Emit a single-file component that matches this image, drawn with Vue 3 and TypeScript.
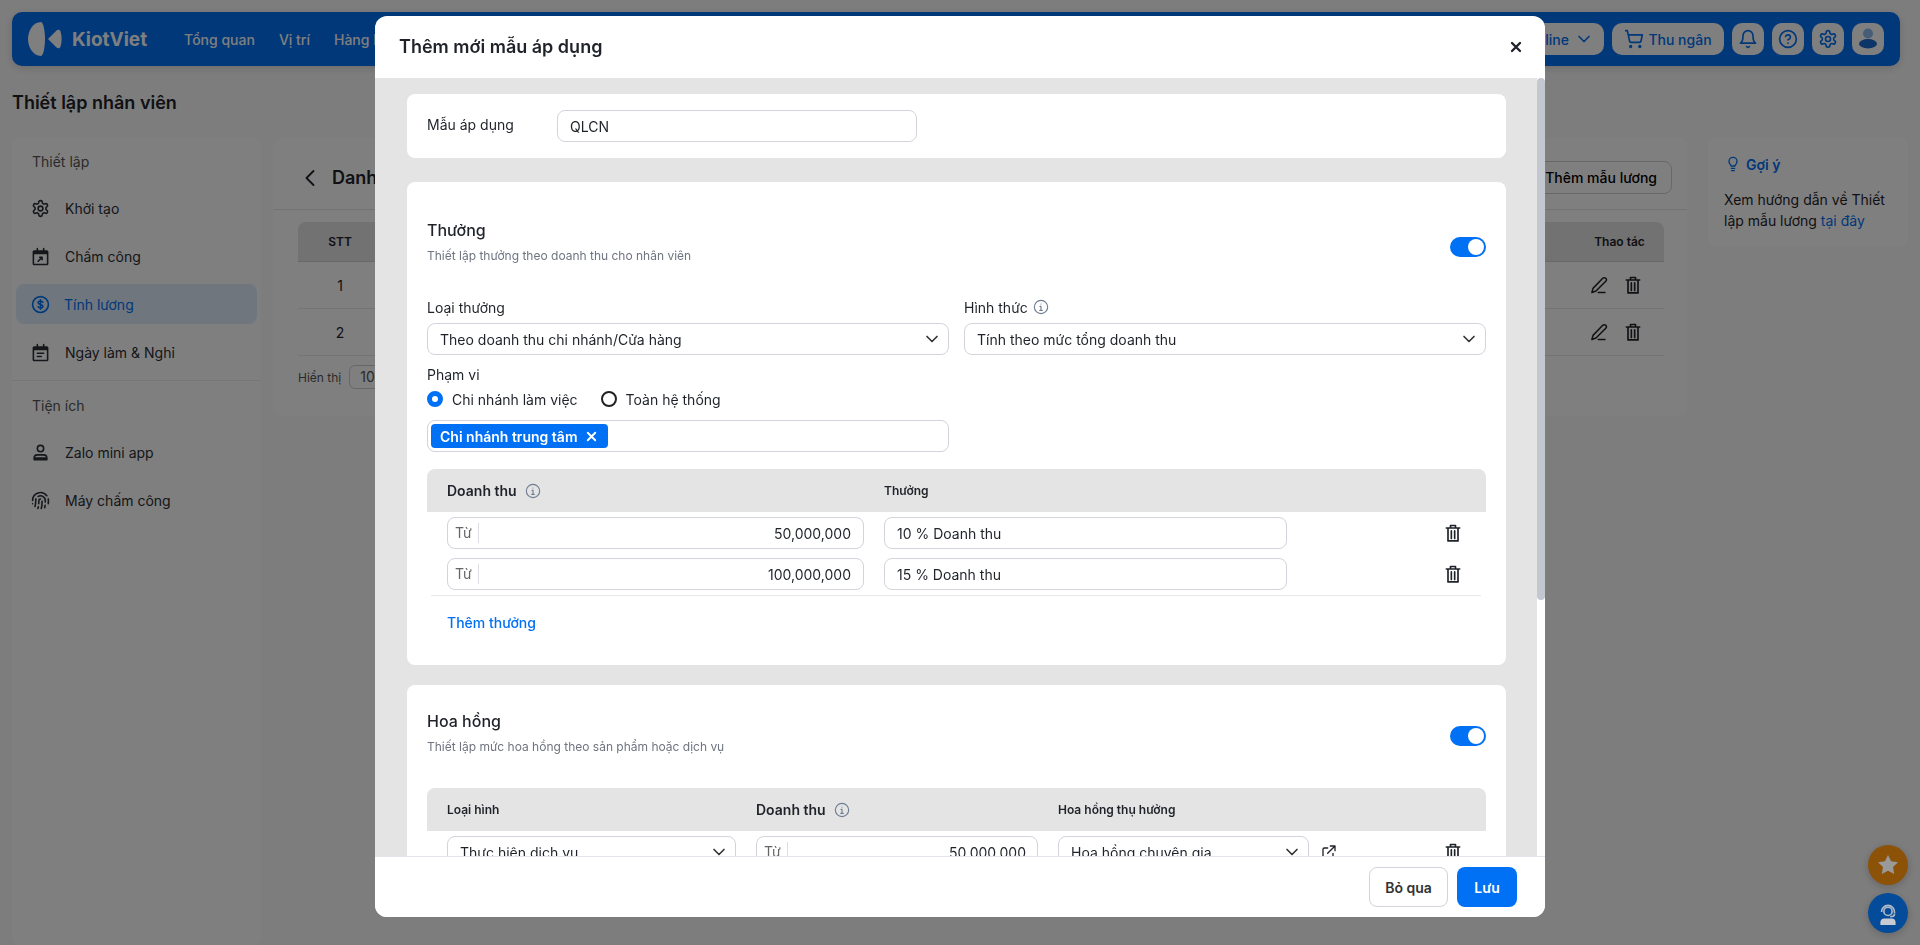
<template>
  <div class="page">
    <header class="topbar">
      <div class="brand">
        <svg class="logo" viewBox="0 0 34 34">
          <path d="M13 0C5 0 0 9 0 17s5 17 13 17c2.500 0 4-10 4-17S15.500 0 13 0z" />
          <path d="M20 17l8-8c2-2 4-1.500 4.500.5 1.500 4.500 1.500 10.500 0 15-.5 2-2.500 2.500-4.500.5z" />
        </svg>
        <span class="brand-name">KiotViet</span>
      </div>
      <nav class="nav">
        <a v-for="item in navItems" :key="item">{{ item }}</a>
      </nav>
      <div class="top-actions">
        <button class="top-btn">
          Bán online
          <svg class="ico ico-20" viewBox="0 0 24 24"><path :d="icons.chevronDown" /></svg>
        </button>
        <button class="top-btn cashier">
          <svg class="ico ico-20" viewBox="0 0 24 24"><path :d="icons.cart" /></svg>
          Thu ngân
        </button>
        <button v-for="name in topIcons" :key="name" class="top-icon">
          <svg class="ico ico-20" viewBox="0 0 24 24"><path :d="icons[name]" /></svg>
        </button>
        <button class="top-icon">
          <svg class="avatar" viewBox="0 0 32 32">
            <circle cx="16" cy="10.500" r="5" fill="#8fb8ee" />
            <ellipse cx="16" cy="20.700" rx="9" ry="4.700" fill="#1a6bd0" />
          </svg>
        </button>
      </div>
    </header>

    <h1 class="page-title">Thiết lập nhân viên</h1>

    <div class="layout">
      <aside class="side">
        <div class="side-label">Thiết lập</div>
        <a
          v-for="item in setupItems"
          :key="item.label"
          class="side-item"
          :class="{ active: item.active }"
        >
          <svg class="ico side-ico" viewBox="0 0 24 24"><path :d="icons[item.icon]" /></svg>
          {{ item.label }}
        </a>
        <div class="side-divider"></div>
        <div class="side-label second">Tiện ích</div>
        <a v-for="item in toolItems" :key="item.label" class="side-item">
          <svg class="ico side-ico" viewBox="0 0 24 24"><path :d="icons[item.icon]" /></svg>
          {{ item.label }}
        </a>
      </aside>

      <main class="main">
        <div class="main-head">
          <svg class="ico back" viewBox="0 0 24 24"><path :d="icons.chevronLeft" /></svg>
          <h2>Danh sách mẫu lương</h2>
          <button class="outline-btn">Thêm mẫu lương</button>
        </div>
        <div class="list">
          <div class="list-row list-head">
            <span class="stt">STT</span>
            <span>Tên mẫu lương</span>
            <span class="act-title">Thao tác</span>
          </div>
          <div v-for="n in 2" :key="n" class="list-row">
            <span class="stt">{{ n }}</span>
            <span>Mẫu lương {{ n }}</span>
            <span class="act-icons">
              <svg class="ico ico-18" viewBox="0 0 24 24"><path :d="icons.pencil" /></svg>
              <svg class="ico ico-20" viewBox="0 0 24 24"><path :d="icons.trash" /></svg>
            </span>
          </div>
        </div>
        <div class="pager">
          <span>Hiển thị</span>
          <span class="pager-size">10</span>
        </div>
      </main>

      <aside class="hint">
        <div class="hint-title">
          <svg class="ico ico-16" viewBox="0 0 24 24"><path :d="icons.bulb" /></svg>
          Gợi ý
        </div>
        <p>Xem hướng dẫn về Thiết lập mẫu lương <a>tại đây</a></p>
      </aside>
    </div>

    <div class="overlay"></div>

    <div class="fab fab-star">
      <svg viewBox="0 0 24 24" width="24" height="24"><path fill="#9a9a9a" :d="icons.star" /></svg>
    </div>
    <div class="fab fab-help">
      <svg viewBox="0 0 24 24" width="26" height="26" fill="none" stroke="#b4bcc8" stroke-width="1.500">
        <path d="M6 11a6 6 0 0 1 12 0v1.500M18 13c0 1.500-1.500 2.500-4 2.500" />
        <circle cx="12" cy="10.500" r="3.800" />
        <path fill="#c8ccd2" stroke="none" d="M5 23v-2.500c0-2 1.500-3.500 3.500-3.500h7c2 0 3.500 1.500 3.500 3.500V23z" />
      </svg>
    </div>

    <section class="modal">
      <header class="modal-head">
        <h3>Thêm mới mẫu áp dụng</h3>
        <svg class="ico close" viewBox="0 0 24 24"><path :d="icons.x" /></svg>
      </header>

      <div class="modal-main">
        <div class="modal-body">
          <div class="card name-card">
            <label>Mẫu áp dụng</label>
            <div class="field name-input">QLCN</div>
          </div>

          <div class="card bonus-card">
            <div class="card-head">
              <div>
                <h4>Thưởng</h4>
                <p>Thiết lập thưởng theo doanh thu cho nhân viên</p>
              </div>
              <span class="toggle"></span>
            </div>

            <div class="two-cols">
              <div>
                <div class="field-label">Loại thưởng</div>
                <div class="field select">
                  Theo doanh thu chi nhánh/Cửa hàng
                  <svg class="ico ico-20" viewBox="0 0 24 24"><path :d="icons.chevronDown" /></svg>
                </div>
              </div>
              <div>
                <div class="field-label">
                  Hình thức
                  <svg class="ico info" viewBox="0 0 24 24"><path :d="icons.info" /></svg>
                </div>
                <div class="field select">
                  Tính theo mức tổng doanh thu
                  <svg class="ico ico-20" viewBox="0 0 24 24"><path :d="icons.chevronDown" /></svg>
                </div>
              </div>
            </div>

            <div class="field-label scope-label">Phạm vi</div>
            <div class="radios">
              <span class="radio checked"></span>
              <span class="radio-text first">Chi nhánh làm việc</span>
              <span class="radio"></span>
              <span class="radio-text">Toàn hệ thống</span>
            </div>
            <div class="field tag-box">
              <span class="tag">
                Chi nhánh trung tâm
                <svg class="ico tag-x" viewBox="0 0 24 24"><path :d="icons.x" /></svg>
              </span>
            </div>

            <div class="grid-table">
              <div class="bonus-grid table-head">
                <span class="head-big">
                  Doanh thu
                  <svg class="ico info" viewBox="0 0 24 24"><path :d="icons.info" /></svg>
                </span>
                <span class="head-small">Thưởng</span>
              </div>
              <div class="bonus-rows">
                <div v-for="row in bonusRows" :key="row.from" class="bonus-grid">
                  <div class="field amount">
                    <span class="prefix">Từ</span>
                    <span class="value">{{ row.from }}</span>
                  </div>
                  <div class="field plain">{{ row.bonus }}</div>
                  <svg class="ico row-trash" viewBox="0 0 24 24"><path :d="icons.trash" /></svg>
                </div>
              </div>
              <div class="add-row"><a>Thêm thưởng</a></div>
            </div>
          </div>

          <div class="card commission-card">
            <div class="card-head">
              <div>
                <h4>Hoa hồng</h4>
                <p>Thiết lập mức hoa hồng theo sản phẩm hoặc dịch vụ</p>
              </div>
              <span class="toggle"></span>
            </div>
            <div class="grid-table commission-table">
              <div class="commission-grid table-head">
                <span class="head-small">Loại hình</span>
                <span class="head-big">
                  Doanh thu
                  <svg class="ico info" viewBox="0 0 24 24"><path :d="icons.info" /></svg>
                </span>
                <span class="head-small">Hoa hồng thụ hưởng</span>
              </div>
              <div class="commission-grid commission-row">
                <div class="field select">
                  Thực hiện dịch vụ
                  <svg class="ico ico-20" viewBox="0 0 24 24"><path :d="icons.chevronDown" /></svg>
                </div>
                <div class="field amount">
                  <span class="prefix">Từ</span>
                  <span class="value">50,000,000</span>
                </div>
                <div class="field select">
                  Hoa hồng chuyên gia
                  <svg class="ico ico-20" viewBox="0 0 24 24"><path :d="icons.chevronDown" /></svg>
                </div>
                <div class="row-actions">
                  <svg class="ico ico-16" viewBox="0 0 24 24"><path :d="icons.open" /></svg>
                  <svg class="ico row-trash" viewBox="0 0 24 24"><path :d="icons.trash" /></svg>
                </div>
              </div>
            </div>
          </div>
        </div>
        <div class="scrollbar"><div class="scroll-thumb"></div></div>
      </div>

      <footer class="modal-foot">
        <button class="btn-cancel">Bỏ qua</button>
        <button class="btn-save">Lưu</button>
      </footer>
    </section>
  </div>
</template>

<script setup lang="ts">
const icons: Record<string, string> = {
  chevronDown: 'm6 9 6 6 6-6',
  chevronLeft: 'm15 18-6-6 6-6',
  x: 'M18 6 6 18M6 6l12 12',
  cart: 'M2 2h2l2.700 12.400a2 2 0 0 0 2 1.600h9.800a2 2 0 0 0 1.900-1.600L22 7H5.100M8 20a1 1 0 1 0 0 2 1 1 0 0 0 0-2zM19 20a1 1 0 1 0 0 2 1 1 0 0 0 0-2z',
  bell: 'M6 8a6 6 0 0 1 12 0c0 7 3 9 3 9H3s3-2 3-9M10.300 21a1.900 1.900 0 0 0 3.400 0',
  help: 'M12 2a10 10 0 1 0 0 20 10 10 0 0 0 0-20zM9.100 9a3 3 0 0 1 5.800 1c0 2-3 3-3 3M12 17h.01',
  gear: 'M12.200 2h-.4a2 2 0 0 0-2 2v.2a2 2 0 0 1-1 1.700l-.4.300a2 2 0 0 1-2 0l-.2-.1a2 2 0 0 0-2.700.7l-.2.400a2 2 0 0 0 .7 2.700l.2.100a2 2 0 0 1 1 1.700v.5a2 2 0 0 1-1 1.700l-.2.100a2 2 0 0 0-.7 2.700l.2.400a2 2 0 0 0 2.700.7l.2-.1a2 2 0 0 1 2 0l.4.300a2 2 0 0 1 1 1.700v.2a2 2 0 0 0 2 2h.4a2 2 0 0 0 2-2v-.2a2 2 0 0 1 1-1.700l.4-.3a2 2 0 0 1 2 0l.2.100a2 2 0 0 0 2.700-.7l.2-.4a2 2 0 0 0-.7-2.700l-.2-.1a2 2 0 0 1-1-1.700v-.5a2 2 0 0 1 1-1.700l.2-.1a2 2 0 0 0 .7-2.700l-.2-.4a2 2 0 0 0-2.700-.7l-.2.100a2 2 0 0 1-2 0l-.4-.3a2 2 0 0 1-1-1.700V4a2 2 0 0 0-2-2zM15 12a3 3 0 1 1-6 0 3 3 0 0 1 6 0z',
  calendarEdit: 'M8 2v4M16 2v4M4 5h16a1 1 0 0 1 1 1v15a1 1 0 0 1-1 1H4a1 1 0 0 1-1-1V6a1 1 0 0 1 1-1zM3 8h18M3 6.500h18M9 18l5-5M11 13h3v3',
  calendarList: 'M8 2v4M16 2v4M4 5h16a1 1 0 0 1 1 1v15a1 1 0 0 1-1 1H4a1 1 0 0 1-1-1V6a1 1 0 0 1 1-1zM3 8h18M3 6.500h18M8 13h8M8 17h5',
  dollar: 'M12 2a10 10 0 1 0 0 20 10 10 0 0 0 0-20zM15 9.200c-.5-1-1.600-1.700-3-1.700-1.800 0-3 .9-3 2.200 0 3 6 1.600 6 4.600 0 1.300-1.200 2.200-3 2.200-1.400 0-2.500-.7-3-1.700M12 6v12',
  user: 'M12 3a4 4 0 1 0 0 8 4 4 0 0 0 0-8zM4 21v-2a4 4 0 0 1 4-4h8a4 4 0 0 1 4 4v2zM4 19h16',
  fingerprint: 'M12 10a2 2 0 0 0-2 2c0 1-.1 2.500-.3 4M14 13c0 2.400 0 6.400-1 9M17.300 21c.1-.6.4-2.300.5-3M2 12a10 10 0 0 1 18-6M2 16h.01M21.800 16c.2-2 .1-5.400 0-6M5 19.500C5.500 18 6 15 6 12a6 6 0 0 1 .3-2M8.700 22c.2-.7.4-1.300.6-2M9 6.800a6 6 0 0 1 9 5.200v2',
  pencil: 'M17 3a2.800 2.800 0 1 1 4 4L8 20l-5.500 2 1.500-5.500zM11 22h9',
  trash: 'M4 6h16M9 6V3h6v3M6 6v15.500h12V6M10 9.500v9M14 9.500v9',
  bulb: 'M10 22h4M9.500 18.500h5M15 15c.2-1.200.7-2 1.500-2.800A6 6 0 0 0 18 8 6 6 0 0 0 6 8c0 1.500.5 3 1.500 4.200.8.800 1.300 1.600 1.500 2.800z',
  info: 'M12 2a10 10 0 1 0 0 20 10 10 0 0 0 0-20zM10.500 11H12v6M10 17h4M12 7.500h.01',
  open: 'M14 3h7v7M10 14 21 3M18 14v5a2 2 0 0 1-2 2H5a2 2 0 0 1-2-2V8a2 2 0 0 1 2-2h5',
  star: 'M12 2l3.100 6.300L22 9.300l-5 4.800 1.200 6.900-6.200-3.200L5.800 21 7 14.100 2 9.300l6.900-1z'
}

const navItems = ['Tổng quan', 'Vị trí', 'Hàng hóa', 'Đơn hàng', 'Khách hàng', 'Nhân viên', 'Sổ quỹ', 'Báo cáo']
const topIcons = ['bell', 'help', 'gear']

const setupItems = [
  { label: 'Khởi tạo', icon: 'gear', active: false },
  { label: 'Chấm công', icon: 'calendarEdit', active: false },
  { label: 'Tính lương', icon: 'dollar', active: true },
  { label: 'Ngày làm & Nghỉ', icon: 'calendarList', active: false }
]
const toolItems = [
  { label: 'Zalo mini app', icon: 'user' },
  { label: 'Máy chấm công', icon: 'fingerprint' }
]

const bonusRows = [
  { from: '50,000,000', bonus: '10 % Doanh thu' },
  { from: '100,000,000', bonus: '15 % Doanh thu' }
]
</script>

<style>
html,
body {
  margin: 0;
  height: 100%;
  overflow: hidden;
}
</style>

<style scoped>
* {
  box-sizing: border-box;
}
.page {
  height: 945px;
  padding: 12px;
  display: flex;
  flex-direction: column;
  background: #f9fbf9;
  font-family: Inter, 'Noto Sans', sans-serif;
  font-size: 14px;
  color: #1f2329;
  overflow: hidden;
}
button {
  font: inherit;
  border: none;
}
.ico {
  fill: none;
  stroke: currentColor;
  stroke-width: 2;
  stroke-linecap: round;
  stroke-linejoin: round;
  flex: none;
}
.ico-16 {
  width: 16px;
  height: 16px;
}
.ico-18 {
  width: 18px;
  height: 18px;
}
.ico-20 {
  width: 20px;
  height: 20px;
}

.topbar {
  flex: none;
  height: 54px;
  margin-right: 8px;
  padding: 0 16px;
  display: flex;
  align-items: center;
  background: #0070f4;
  border-radius: 10px;
  box-shadow: 0 2px 8px rgba(0, 0, 0, 0.15);
}
.brand {
  display: flex;
  align-items: center;
  gap: 10px;
}
.logo {
  width: 34px;
  height: 34px;
  fill: #fff;
}
.brand-name {
  color: #fff;
  font-size: 19px;
  font-weight: 700;
}
.nav {
  margin-left: 37px;
  display: flex;
  gap: 24px;
  color: #fff;
  font-weight: 500;
}
.top-actions {
  margin-left: auto;
  display: flex;
  gap: 8px;
}
.top-btn,
.top-icon {
  height: 32px;
  display: flex;
  align-items: center;
  justify-content: center;
  background: #fff;
  color: #0070f4;
  border-radius: 10px;
  font-weight: 500;
}
.top-btn {
  padding: 0 10px 0 12px;
  gap: 5px;
}
.cashier {
  width: 112px;
  padding: 0;
  gap: 4px;
}
.top-icon {
  width: 32px;
  padding: 0;
}
.avatar {
  width: 32px;
  height: 32px;
}

.page-title {
  flex: none;
  margin: 26px 0 24px;
  font-size: 18px;
  line-height: 22px;
  font-weight: 600;
}

.layout {
  flex: 1;
  min-height: 0;
  margin-bottom: -12px;
  display: flex;
  align-items: flex-start;
}
.side,
.main,
.hint {
  background: #fff;
  border-radius: 8px;
}
.side {
  flex: none;
  width: 249px;
  align-self: stretch;
  padding-top: 12px;
  margin-right: 13px;
}
.side-label {
  height: 24px;
  line-height: 24px;
  padding-left: 20px;
  margin-bottom: 14px;
  color: #555;
}
.side-label.second {
  margin-top: 13px;
  margin-bottom: 14px;
}
.side-item {
  height: 40px;
  margin: 0 4px 8px;
  padding-left: 15px;
  display: flex;
  align-items: center;
  gap: 15px;
  border-radius: 8px;
  color: #2a2e34;
}
.side-ico {
  width: 19px;
  height: 19px;
}
.side-item.active {
  background: #dfecfb;
  color: #0070f4;
  gap: 14px;
}
.side-divider {
  height: 1px;
  margin-top: 1px;
  background: #ececec;
}

.main {
  flex: none;
  width: 1413px;
  margin-right: 21px;
  padding-bottom: 27px;
}
.main-head {
  display: flex;
  align-items: center;
  padding: 23px 15px 15px 22px;
  border-bottom: 1px solid #e4e4e4;
}
.back {
  width: 28px;
  height: 28px;
  margin-right: 8px;
  stroke-width: 1.600;
}
.main-head h2 {
  margin: 0;
  font-size: 18px;
  font-weight: 600;
}
.outline-btn {
  margin-left: auto;
  height: 33px;
  padding: 0 14px;
  background: #fff;
  border: 1px solid #cfcfcf;
  border-radius: 8px;
  font-weight: 500;
}
.list {
  margin: 12px 23px 0 24px;
}
.list-row {
  height: 47px;
  display: grid;
  grid-template-columns: 84px 1fr 59px;
  align-items: center;
  padding-right: 15px;
  border-bottom: 1px solid #e8e8e8;
}
.list-head {
  height: 40px;
  background: #e4e4e4;
  border-radius: 8px 8px 0 0;
  font-size: 12px;
  font-weight: 600;
  border-bottom-color: #d0d0d0;
}
.stt {
  text-align: center;
}
.act-title {
  text-align: center;
}
.act-icons {
  display: flex;
  align-items: center;
  gap: 15px;
}
.pager {
  margin: 9px 0 0 24px;
  display: flex;
  align-items: center;
  gap: 8px;
  font-size: 12px;
  color: #555;
}
.pager-size {
  width: 60px;
  height: 24px;
  line-height: 22px;
  padding-left: 10px;
  border: 1px solid #cfcfcf;
  border-radius: 6px;
  font-size: 14px;
}

.hint {
  flex: none;
  width: 200px;
  height: 108px;
  padding: 16px;
}
.hint-title {
  display: flex;
  align-items: center;
  gap: 5px;
  height: 20px;
  margin-left: 1px;
  color: #0070f4;
  font-weight: 600;
}
.hint p {
  margin: 16px 0 0;
  line-height: 20.500px;
}
.hint a {
  color: #0070f4;
}

.overlay {
  position: fixed;
  inset: 0;
  background: rgba(0, 0, 0, 0.5);
}
.fab {
  position: fixed;
  right: 12px;
  width: 40px;
  height: 40px;
  border-radius: 50%;
  display: flex;
  align-items: center;
  justify-content: center;
  box-shadow: 0 2px 8px rgba(0, 0, 0, 0.2);
}
.fab-star {
  top: 845px;
  background: #8b5208;
}
.fab-help {
  top: 893px;
  background: #044b9a;
  overflow: hidden;
}
.modal {
  position: fixed;
  left: 375px;
  top: 16px;
  width: 1170px;
  height: 901px;
  display: flex;
  flex-direction: column;
  background: #fff;
  border-radius: 12px;
  overflow: hidden;
}
.modal-head {
  flex: none;
  height: 62px;
  padding: 0 25px 1px 24px;
  display: flex;
  align-items: center;
  justify-content: space-between;
}
.modal-head h3 {
  margin: 0;
  font-size: 18px;
  font-weight: 600;
}
.close {
  width: 16px;
  height: 16px;
  margin-right: -4px;
  stroke-width: 3.500;
}
.modal-main {
  flex: 1;
  min-height: 0;
  display: flex;
}
.modal-body {
  flex: 1;
  min-width: 0;
  overflow: hidden;
  padding: 16px 31px 16px 32px;
  background: #e4e4e4;
}
.scrollbar {
  flex: none;
  width: 8px;
  background: #fff;
}
.scroll-thumb {
  height: 522px;
  background: #c3c8d0;
  border-radius: 4px;
}
.card {
  background: #fff;
  border-radius: 8px;
  padding: 0 20px;
}
.name-card {
  height: 64px;
  display: flex;
  align-items: center;
}
.name-card label {
  width: 130px;
  margin-top: -3px;
}
.field {
  height: 32px;
  display: flex;
  align-items: center;
  background: #fff;
  border: 1px solid #d2d4dc;
  border-radius: 8px;
  padding: 0 11px 0 12px;
}
.name-input {
  width: 360px;
}
.bonus-card {
  margin-top: 24px;
  padding-top: 36px;
  padding-bottom: 32px;
}
.commission-card {
  margin-top: 20px;
  padding-top: 24px;
  padding-bottom: 32px;
}
.card-head {
  display: flex;
  align-items: center;
  justify-content: space-between;
}
.card-head h4 {
  margin: 0;
  font-size: 16px;
  line-height: 24px;
  font-weight: 500;
}
.card-head p {
  margin: 6px 0 0;
  font-size: 12px;
  line-height: 16px;
  color: #6f7480;
}
.toggle {
  position: relative;
  width: 36px;
  height: 20px;
  margin-top: 11px;
  background: #0070f4;
  border-radius: 10px;
}
.commission-card .toggle {
  margin-top: 8px;
}
.toggle::after {
  content: '';
  position: absolute;
  top: 2px;
  right: 2px;
  width: 16px;
  height: 16px;
  background: #fff;
  border-radius: 50%;
}
.two-cols {
  margin-top: 33px;
  display: grid;
  grid-template-columns: 1fr 1fr;
  column-gap: 15px;
}
.field-label {
  height: 20px;
  margin-bottom: 6px;
  display: flex;
  align-items: center;
  gap: 5px;
}
.info {
  width: 16px;
  height: 16px;
  stroke-width: 1.700;
  color: #6f7d92;
}
.select {
  justify-content: space-between;
}
.select .ico {
  color: #333;
  margin-right: -5px;
}
.scope-label {
  margin-top: 9px;
  margin-bottom: 5px;
}
.radios {
  height: 20px;
  display: flex;
  align-items: center;
}
.radio {
  width: 16px;
  height: 16px;
  border: 2px solid #222;
  border-radius: 50%;
}
.radio.checked {
  border: 5px solid #0070f4;
  background: #fff;
}
.radio-text {
  margin-left: 9px;
}
.radio-text.first {
  margin-right: 23px;
}
.tag-box {
  width: 521.500px;
  margin-top: 11px;
  padding: 0 3px;
}
.tag {
  height: 24px;
  padding: 0 9px;
  display: flex;
  align-items: center;
  gap: 6px;
  background: #0070f4;
  color: #fff;
  border-radius: 4px;
  font-weight: 600;
}
.tag-x {
  width: 15px;
  height: 15px;
  stroke-width: 3;
}
.grid-table {
  margin-top: 17px;
}
.commission-table {
  margin-top: 33px;
}
.table-head {
  height: 43px;
  align-items: center;
  background: #e4e4e4;
  border-radius: 8px 8px 0 0;
}
.head-big {
  display: flex;
  align-items: center;
  gap: 8px;
  font-weight: 600;
}
.head-small {
  font-size: 12px;
  font-weight: 600;
}
.bonus-grid {
  display: grid;
  grid-template-columns: 417px 403px 1fr;
  column-gap: 20px;
  padding-left: 20px;
  align-items: center;
}
.bonus-rows {
  padding-top: 5px;
  display: flex;
  flex-direction: column;
  gap: 9px;
}
.field.amount {
  padding: 0 12px 0 7px;
}
.commission-row .field.amount {
  padding-right: 11px;
}
.prefix {
  padding-right: 6px;
  border-right: 1px solid #dcdfe6;
  color: #666;
  line-height: 20px;
}
.value {
  margin-left: auto;
}
.row-trash {
  width: 20px;
  height: 20px;
  justify-self: end;
  margin-right: 23px;
}
.add-row {
  margin: 5px 5px 0 4px;
  padding: 17px 0 0 16px;
  border-top: 1px solid #e8e8e8;
  line-height: 20px;
  color: #0070f4;
  font-weight: 500;
}
.commission-grid {
  display: grid;
  grid-template-columns: 289px 282px 251px 1fr;
  column-gap: 20px;
  padding-left: 20px;
  align-items: center;
}
.commission-row {
  margin-top: 5px;
}
.row-actions {
  display: flex;
  align-items: center;
  justify-content: space-between;
  margin-left: -8px;
}
.modal-foot {
  flex: none;
  height: 61px;
  padding-right: 28px;
  display: flex;
  align-items: center;
  justify-content: flex-end;
  gap: 9px;
  background: #fff;
  border-top: 1px solid #e4e4ec;
}
.btn-cancel,
.btn-save {
  height: 40px;
  border-radius: 8px;
  font-weight: 600;
}
.btn-cancel {
  width: 79px;
  background: #fff;
  border: 1px solid #d2d4dc;
  color: #333;
}
.btn-save {
  width: 60px;
  background: #0070f4;
  color: #fff;
}
</style>
